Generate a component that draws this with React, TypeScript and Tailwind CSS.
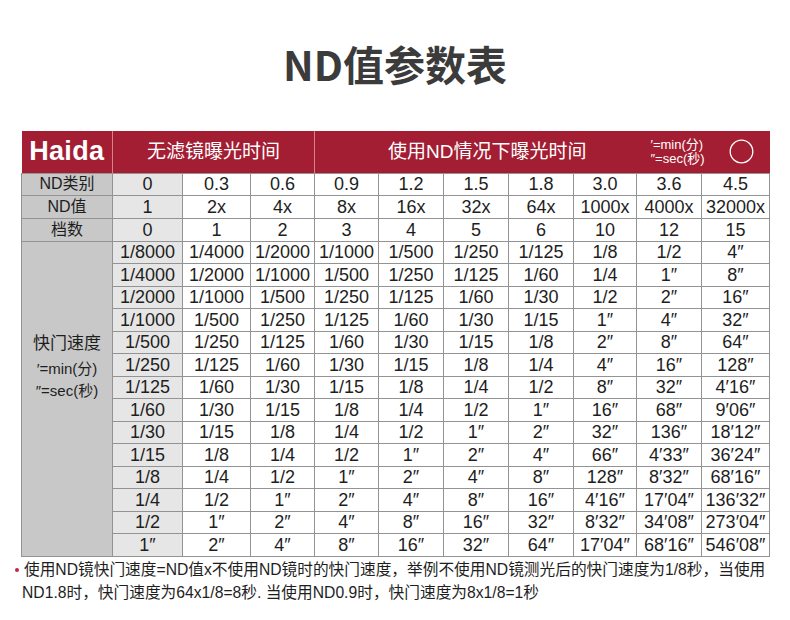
// ND值参数表: Haida ND filter exposure table.

const COL_WIDTHS = [91, 70, 68, 64, 64, 65, 65, 65, 63, 65, 68];

const ND_TYPES = ['0', '0.3', '0.6', '0.9', '1.2', '1.5', '1.8', '3.0', '3.6', '4.5'];
const ND_VALUES = ['1', '2x', '4x', '8x', '16x', '32x', '64x', '1000x', '4000x', '32000x'];
const STOPS = ['0', '1', '2', '3', '4', '5', '6', '10', '12', '15'];

const SHUTTER_ROWS: string[][] = [
  ['1/8000', '1/4000', '1/2000', '1/1000', '1/500', '1/250', '1/125', '1/8', '1/2', '4″'],
  ['1/4000', '1/2000', '1/1000', '1/500', '1/250', '1/125', '1/60', '1/4', '1″', '8″'],
  ['1/2000', '1/1000', '1/500', '1/250', '1/125', '1/60', '1/30', '1/2', '2″', '16″'],
  ['1/1000', '1/500', '1/250', '1/125', '1/60', '1/30', '1/15', '1″', '4″', '32″'],
  ['1/500', '1/250', '1/125', '1/60', '1/30', '1/15', '1/8', '2″', '8″', '64″'],
  ['1/250', '1/125', '1/60', '1/30', '1/15', '1/8', '1/4', '4″', '16″', '128″'],
  ['1/125', '1/60', '1/30', '1/15', '1/8', '1/4', '1/2', '8″', '32″', '4′16″'],
  ['1/60', '1/30', '1/15', '1/8', '1/4', '1/2', '1″', '16″', '68″', '9′06″'],
  ['1/30', '1/15', '1/8', '1/4', '1/2', '1″', '2″', '32″', '136″', '18′12″'],
  ['1/15', '1/8', '1/4', '1/2', '1″', '2″', '4″', '66″', '4′33″', '36′24″'],
  ['1/8', '1/4', '1/2', '1″', '2″', '4″', '8″', '128″', '8′32″', '68′16″'],
  ['1/4', '1/2', '1″', '2″', '4″', '8″', '16″', '4′16″', '17′04″', '136′32″'],
  ['1/2', '1″', '2″', '4″', '8″', '16″', '32″', '8′32″', '34′08″', '273′04″'],
  ['1″', '2″', '4″', '8″', '16″', '32″', '64″', '17′04″', '68′16″', '546′08″'],
];

const FONT = "font-['Liberation_Sans','Noto_Sans_CJK_SC',sans-serif]";

/** En datacell; första kolumnen (ND 0) har ljusgrå bakgrund. */
function DataCell({ value, index }: { value: string; index: number }) {
  return (
    <td
      className={`border border-[#939393] p-0 text-center text-[18px] leading-none text-[#1e1e1e] ${
        index === 0 ? 'bg-[#e6e6e6]' : 'bg-white'
      }`}
    >
      {value}
    </td>
  );
}

function LabelRow({ label, values, height }: { label: string; values: string[]; height: string }) {
  return (
    <tr className={height}>
      <td className="border border-[#939393] bg-[#c8c8c8] p-0 text-center text-[16px] leading-none text-[#1e1e1e]">
        {label}
      </td>
      {values.map((v, i) => (
        <DataCell key={i} value={v} index={i} />
      ))}
    </tr>
  );
}

export default function App() {
  return (
    <div className={`h-[620px] w-[790px] overflow-hidden bg-white ${FONT}`}>
      <h1 className="flex h-[131px] items-center justify-center pb-1 font-['Noto_Sans_CJK_SC',sans-serif] text-[41px] font-bold leading-none text-[#3b3b3b]">
        ND值参数表
      </h1>

      <table className="ml-[21px] table-fixed border-collapse">
        <colgroup>
          {COL_WIDTHS.map((w, i) => (
            <col key={i} style={{ width: w }} />
          ))}
        </colgroup>
        <thead>
          <tr className="h-[42px] bg-[#a31d33] text-white">
            <th className="border-r border-[#d8808c] p-0 text-center text-[27px] font-bold leading-none tracking-[0.3px]">
              Haida
            </th>
            <th
              colSpan={3}
              className="border-r border-[#d8808c] p-0 text-center text-[19px] font-normal leading-none"
            >
              无滤镜曝光时间
            </th>
            <th colSpan={7} className="p-0 font-normal">
              <div className="flex items-center pl-[73px]">
                <span className="text-[19px] leading-none">使用ND情况下曝光时间</span>
                <span className="ml-[64px] flex flex-col items-start text-[13px] leading-[14px]">
                  <span>′=min(分)</span>
                  <span>″=sec(秒)</span>
                </span>
                <svg className="ml-[24px]" width="25" height="25" viewBox="0 0 25 25">
                  <circle cx="12.5" cy="12.5" r="11.3" fill="none" stroke="white" strokeWidth="1.3" />
                </svg>
              </div>
            </th>
          </tr>
        </thead>
        <tbody>
          <LabelRow label="ND类别" values={ND_TYPES} height="h-[22px]" />
          <LabelRow label="ND值" values={ND_VALUES} height="h-[23px]" />
          <LabelRow label="档数" values={STOPS} height="h-[23px]" />
          {SHUTTER_ROWS.map((row, r) => (
            <tr key={r} className="h-[22.5px]">
              {r === 0 ? (
                <td
                  rowSpan={SHUTTER_ROWS.length}
                  className="border border-[#939393] bg-[#c8c8c8] p-0 align-top text-[#1e1e1e]"
                >
                  <div className="flex flex-col items-center pt-[91px]">
                    <span className="text-[17px] leading-[22px]">快门速度</span>
                    <span className="mt-[3px] text-[15px] leading-[22px]">′=min(分)</span>
                    <span className="text-[15px] leading-[22px]">″=sec(秒)</span>
                  </div>
                </td>
              ) : null}
              {row.map((v, i) => (
                <DataCell key={i} value={v} index={i} />
              ))}
            </tr>
          ))}
        </tbody>
      </table>

      <div className="relative mt-[1px] pl-[24px] text-[15.7px] leading-[23px] text-[#1e1e1e]">
        <span className="absolute left-[15px] top-[10px] h-[4px] w-[4px] rounded-full bg-[#c0283c]" />
        <p className="whitespace-nowrap">
          使用ND镜快门速度=ND值x不使用ND镜时的快门速度，举例不使用ND镜测光后的快门速度为1/8秒，当使用
        </p>
        <p className="-ml-[2px] whitespace-nowrap">ND1.8时，快门速度为64x1/8=8秒. 当使用ND0.9时，快门速度为8x1/8=1秒</p>
      </div>
    </div>
  );
}
